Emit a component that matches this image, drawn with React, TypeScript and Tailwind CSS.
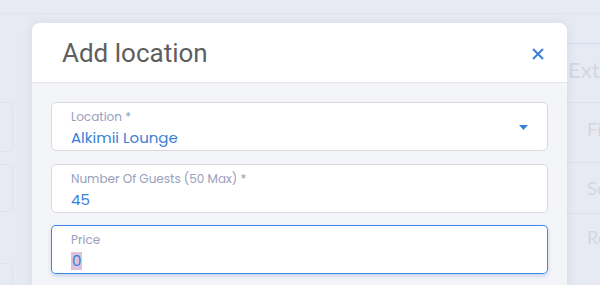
import React from "react";

const Field = ({ label, value, focused, select }: { label: string; value: React.ReactNode; focused?: boolean; select?: boolean }) => (
  <div
    className={
      focused
        ? "relative h-[49px] rounded-[5px] bg-white px-[20px] pt-[7px] ring-1 ring-inset ring-[#3d8ae5] shadow-[0_2px_4px_#c5cfe6]"
        : "relative h-[49px] rounded-[5px] bg-white px-[19px] pt-[6px] border border-solid border-[#d9d9dc]"
    }
  >
    <div className="text-[12px] leading-[16px] text-[#98a0bd] font-['Poppins','Inter',sans-serif]">{label}</div>
    <div className="mt-[3px] text-[15px] leading-[20px] text-[#3b80d8] font-['Poppins','Inter',sans-serif]">{value}</div>
    {select && (
      <svg className="absolute right-[19px] top-[22px]" width="9" height="5" viewBox="0 0 9 5">
        <path d="M0 0 L9 0 L4.5 5 Z" fill="#3b80d8" />
      </svg>
    )}
  </div>
);

export default function App() {
  return (
    <div className="relative w-[600px] h-[285px] overflow-hidden bg-[#e8eaf3] font-['Inter',sans-serif]">
      {/* faint background page */}
      <div className="h-[14px] border-b border-[#e1e4ee]" />
      <div className="flex">
        <div className="w-[32px] flex flex-col pt-[88px] gap-[12px]">
          <div className="w-[13px] h-[50px] border border-l-0 border-[#dfe2ec] rounded-r-[4px]" />
          <div className="w-[13px] h-[48px] border border-l-0 border-[#dfe2ec] rounded-r-[4px]" />
          <div className="mt-[39px] w-[13px] h-[30px] border border-l-0 border-[#dfe2ec] rounded-r-[4px]" />
        </div>
        <div className="flex-1" />
        <div className="w-[33px] pt-[29px] flex flex-col text-[#d3d6e2] font-['Lato',sans-serif] whitespace-nowrap overflow-hidden">
          <div className="border-t border-[#d4dcf0] h-[59px] flex items-start pt-[13px] text-[22px] leading-[26px] pl-[1px]">Extra</div>
          <div className="border-t border-[#dde0ea] h-[60px] flex items-center pl-[20px] text-[18px] pb-[6px]">First</div>
          <div className="border-t border-[#dde0ea] h-[51px] flex items-center pl-[20px] text-[18px]">Second</div>
          <div className="border-t border-[#dde0ea] h-[62px] flex items-center pl-[20px] text-[18px] pb-[14px]">Rest</div>
        </div>
      </div>

      {/* modal */}
      <div className="absolute left-[32px] top-[23px] w-[535px] h-[300px] rounded-t-[8px] bg-[#f4f5f9] shadow-[0_0_12px_rgba(80,90,130,0.12)] overflow-hidden">
        <div className="h-[60px] bg-white border-b border-[#e3e4ea] flex items-center justify-between pl-[30px] pr-[23px]">
          <div className="text-[26px] text-[#5e5e5e] font-['Roboto',sans-serif] leading-none pt-[1px]">Add location</div>
          <svg width="12" height="12" viewBox="0 0 12 12" className="mt-[2px]">
            <path d="M1 1 L11 11 M11 1 L1 11" stroke="#3b80d8" strokeWidth="2" strokeLinecap="butt" />
          </svg>
        </div>
        <div className="px-[19px] pt-[19px] flex flex-col gap-[12.5px]">
          <Field label="Location *" value="Alkimii Lounge" select />
          <Field label="Number Of Guests (50 Max) *" value="45" />
          <Field label="Price" value={<span className="inline-block bg-[#dcc2dc] text-[#3b80d8] px-[1px] leading-[18px]">0</span>} focused />
        </div>
      </div>
    </div>
  );
}
